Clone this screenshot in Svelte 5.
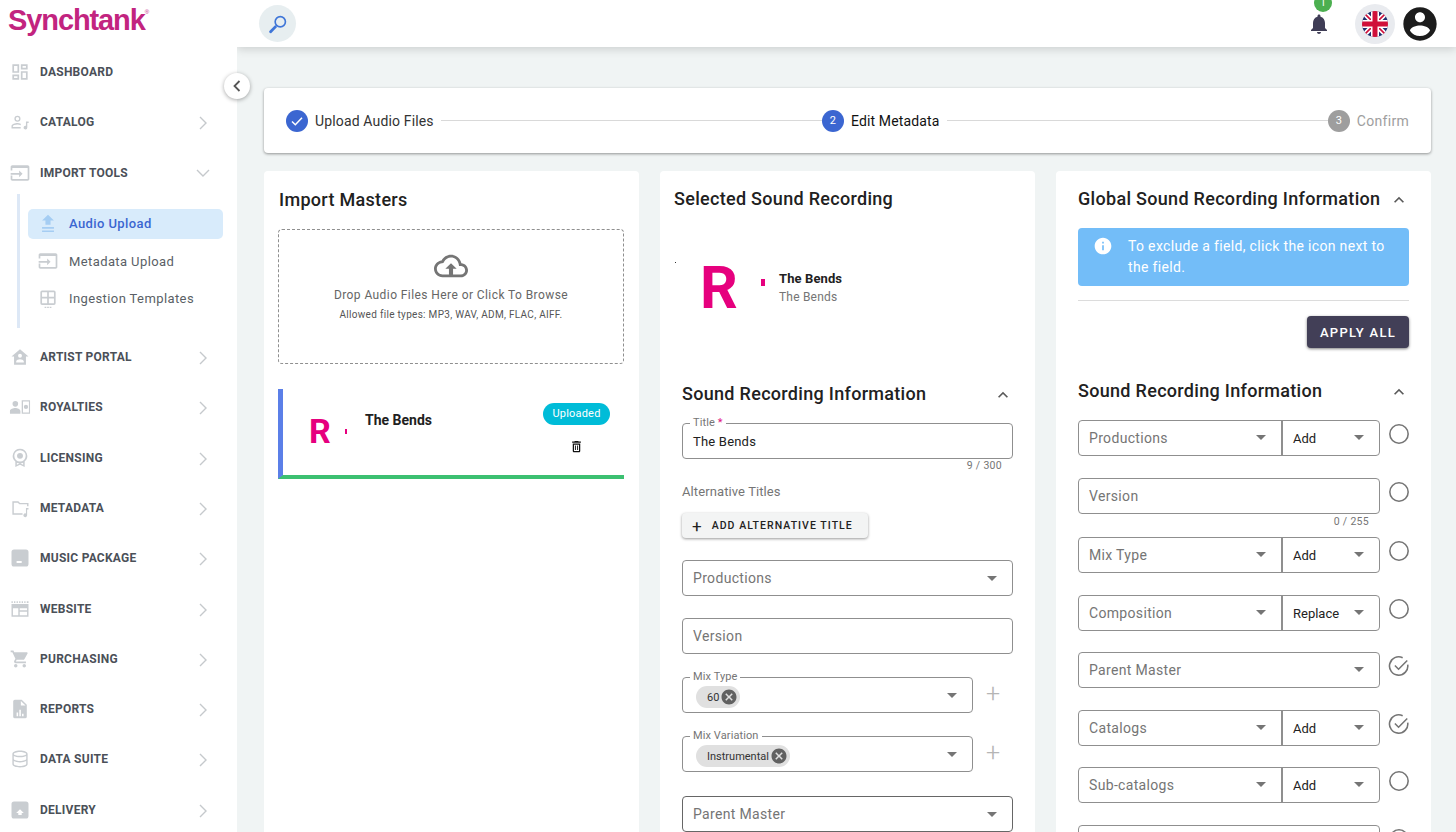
<script>
  const icons = {
    dashboard: 'M19 5v2h-4V5h4M9 5v6H5V5h4m10 8v6h-4v-6h4M9 17v2H5v-2h4M21 3h-8v6h8V3zM11 3H3v10h8V3zm10 8h-8v10h8V11zm-10 4H3v6h8v-6z',
    catalog: 'M9 4.5a3.6 3.6 0 1 1 0 7.2a3.6 3.6 0 0 1 0-7.2zm0 1.6a2 2 0 1 0 0 4a2 2 0 0 0 0-4zM2 19.5v-2.6c0-2.3 4.5-3.6 7-3.6 1.3 0 2.7.3 3.9.8v1.7c-1.2-.6-2.6-.9-3.9-.9-2.6 0-5.4 1.1-5.4 2v1h9.2v1.6zM19 11.5h3.2v1.7h-1.6v5.4a2.2 2.2 0 1 1-1.6-2.1z',
    input: 'M21 3.01H3c-1.1 0-2 .9-2 2V9h2V6h18v13.02H3V15H1v4.01c0 1.1.9 1.98 2 1.98h18c1.1 0 2-.88 2-1.98v-14c0-1.11-.9-2-2-2zM11 17l4-4-4-4v3H1v2h10v3z',
    upload: 'M12 1l7 7h-4v5H9V8H5zM5 15.5h14v2H5zM5 19.5h14v2H5z',
    templates: 'M5 2h14a2 2 0 0 1 2 2v13a2 2 0 0 1-2 2H5a2 2 0 0 1-2-2V4a2 2 0 0 1 2-2zm0 2v5.5h6V4zm8 0v5.5h6V4zm-8 7.500V17h6v-5.500zm8 0V17h6v-5.500zM8 21h2v1.500H8zM11 21h2v1.500h-2zM14 21h2v1.500h-2z',
    artist: 'M12 3l10 8.500h-3V21H5v-9.500H2zm0 5.200a2.300 2.300 0 1 0 0 4.600a2.300 2.300 0 0 0 0-4.600zM7.500 18.500h9v-1.200c0-1.800-3-2.700-4.500-2.700s-4.500.9-4.500 2.700z',
    royalties: 'M6.500 5a3.300 3.300 0 1 1 0 6.600a3.300 3.300 0 0 1 0-6.600zM0 20v-3c0-2.500 4.300-3.800 6.500-3.800s6 1.300 6 3.800v3zM14 4h10v16H14zm1.500 1.500v13h7v-13zM19 9.500a2.500 2.500 0 1 1 0 5a2.500 2.500 0 0 1 0-5z',
    licensing: 'M12 1a8.500 8.500 0 0 1 5.500 15v6.500L12 20l-5.500 2.500V16A8.500 8.500 0 0 1 12 1zm0 1.800a6.700 6.700 0 1 0 0 13.400a6.700 6.700 0 0 0 0-13.400zM12 6a3.500 3.500 0 1 1 0 7a3.500 3.500 0 0 1 0-7zM8.300 17.600v2.200l3.700-1.600 3.700 1.600v-2.200a8.500 8.500 0 0 1-7.400 0z',
    folder: 'M3 4h7l2 2h10v4h-1.700V7.700h-9L9.300 5.700H4.700v12.600H15V20H3zM19 12h3v1.700h-1.600V20.500a2.200 2.200 0 1 1-1.400-2z',
    package: 'M5 2h14a3 3 0 0 1 3 3v14a3 3 0 0 1-3 3H5a3 3 0 0 1-3-3V5a3 3 0 0 1 3-3zm3 13.500V18h6v-2.500z',
    website: 'M2 3h1.500v2H2zM5 3h1.500v2H5zM8 3h1.500v2H8zM11 3h1.500v2H11zM14 3h1.500v2H14zM17 3h1.500v2H17zM20 3h2v2h-2zM2 6h20v15H2zm1.700 5v8.300H10V11zm8 0v2.500h8.600V11zm0 4.200v4.100h8.600v-4.100z',
    cart: 'M7 18c-1.100 0-1.990.9-1.990 2S5.900 22 7 22s2-.9 2-2-.9-2-2-2zM1 2v2h2l3.600 7.590-1.350 2.450c-.16.28-.25.61-.25.96 0 1.100.9 2 2 2h12v-2H7.420c-.14 0-.25-.11-.25-.25l.03-.12.9-1.630h7.450c.75 0 1.410-.41 1.750-1.030l3.580-6.490c.08-.14.12-.31.12-.48 0-.55-.45-1-1-1H5.210l-.94-2H1zm16 16c-1.100 0-1.990.9-1.990 2s.89 2 1.990 2 2-.9 2-2-.9-2-2-2z',
    reports: 'M6 1h8l6 6v14a2 2 0 0 1-2 2H6a2 2 0 0 1-2-2V3a2 2 0 0 1 2-2zm7 1.500V8h5.500zM8 16v4.500h1.800V16zM11.200 13v7.500H13V13zM14.400 17.500v3h1.800v-3z',
    data: 'M12 2c5 0 9 1.500 9 4v12c0 2.500-4 4-9 4s-9-1.500-9-4V6c0-2.500 4-4 9-4zm0 1.700c-4.300 0-7.300 1.300-7.300 2.300S7.700 8.300 12 8.300s7.300-1.300 7.300-2.300S16.300 3.700 12 3.700zM4.700 8.500V12c0 1 3 2.300 7.300 2.300s7.300-1.300 7.300-2.300V8.500c-1.700 1-4.400 1.500-7.300 1.500s-5.600-.5-7.300-1.500zm0 6V18c0 1 3 2.300 7.300 2.300s7.300-1.300 7.300-2.300v-3.500c-1.700 1-4.400 1.500-7.300 1.500s-5.600-.5-7.300-1.500z',
    delivery: 'M5 2h14a3 3 0 0 1 3 3v14a3 3 0 0 1-3 3H5a3 3 0 0 1-3-3V5a3 3 0 0 1 3-3zm7 9l-4.500 4.500H10V18h4v-2.500h2.500z'
  };
  const before = [
    { label: 'DASHBOARD', icon: 'dashboard', chevron: false },
    { label: 'CATALOG', icon: 'catalog', chevron: true }
  ];
  const subs = [
    { label: 'Audio Upload', icon: 'upload', active: true },
    { label: 'Metadata Upload', icon: 'input' },
    { label: 'Ingestion Templates', icon: 'templates' }
  ];
  const after = [
    ['ARTIST PORTAL', 'artist'], ['ROYALTIES', 'royalties'], ['LICENSING', 'licensing'],
    ['METADATA', 'folder'], ['MUSIC PACKAGE', 'package'], ['WEBSITE', 'website'],
    ['PURCHASING', 'cart'], ['REPORTS', 'reports'], ['DATA SUITE', 'data'], ['DELIVERY', 'delivery']
  ];
  const globals = [
    { label: 'Productions', mode: 'Add', state: 'open' },
    { label: 'Version', text: true, counter: '0 / 255', state: 'open' },
    { label: 'Mix Type', mode: 'Add', state: 'open', nudge: 'down' },
    { label: 'Composition', mode: 'Replace', state: 'open' },
    { label: 'Parent Master', state: 'done', nudge: 'up' },
    { label: 'Catalogs', mode: 'Add', state: 'done' },
    { label: 'Sub-catalogs', mode: 'Add', state: 'open', nudge: 'up' },
    { label: 'Genres', text: true, state: 'open' }
  ];
</script>

{#snippet caret()}
  <svg class="caret" viewBox="0 0 24 24"><path d="M7 10l5 5 5-5z" /></svg>
{/snippet}

{#snippet chevronUp()}
  <svg class="chev-up" viewBox="0 0 24 24"><path d="M12 8l-6 6 1.410 1.410L12 10.830l4.590 4.580L18 14z" /></svg>
{/snippet}

{#snippet chevronRight()}
  <svg class="nav-chev" viewBox="0 0 12 16"><path d="M3 2l6 6-6 6" /></svg>
{/snippet}

{#snippet navRow(label, icon, chevron)}
  <div class="nav-row">
    <svg class="nav-icon" viewBox="0 0 24 24"><path fill-rule="evenodd" d={icons[icon]} /></svg>
    <span class="nav-label">{label}</span>
    {#if chevron}{@render chevronRight()}{/if}
  </div>
{/snippet}

{#snippet chip(label)}
  <span class="chip">
    {label}
    <svg viewBox="0 0 24 24"><path d="M12 2C6.470 2 2 6.470 2 12s4.470 10 10 10 10-4.470 10-10S17.530 2 12 2zm5 13.590L15.590 17 12 13.410 8.410 17 7 15.590 10.590 12 7 8.410 8.410 7 12 10.590 15.590 7 17 8.410 13.410 12 17 15.590z" /></svg>
  </span>
{/snippet}

<div class="app">
  <aside class="sidebar">
    <div class="logo">Synchtank<sup>®</sup></div>
    {#each before as item}
      {@render navRow(item.label, item.icon, item.chevron)}
    {/each}
    <div class="nav-row">
      <svg class="nav-icon" viewBox="0 0 24 24"><path fill-rule="evenodd" d={icons.input} /></svg>
      <span class="nav-label">IMPORT TOOLS</span>
      <svg class="nav-chev" viewBox="0 0 16 12"><path d="M2 3l6 6 6-6" /></svg>
    </div>
    <div class="sub">
      {#each subs as s}
        <div class="sub-row" class:active={s.active}>
          <svg viewBox="0 0 24 24"><path fill-rule="evenodd" d={icons[s.icon]} /></svg>
          <span>{s.label}</span>
        </div>
      {/each}
    </div>
    {#each after as [label, icon]}
      {@render navRow(label, icon, true)}
    {/each}
    <button class="collapse" aria-label="Collapse">
      <svg viewBox="0 0 12 16"><path d="M8.500 3l-5 5 5 5" /></svg>
    </button>
  </aside>

  <div class="main">
    <header class="topbar">
      <div class="search">
        <svg viewBox="0 0 24 24"><path d="M14.500 3a6.500 6.500 0 1 1 0 13a6.500 6.500 0 0 1 0-13zm0 1.800a4.700 4.700 0 1 0 0 9.400a4.700 4.700 0 0 0 0-9.400z" fill-rule="evenodd" /><path d="M9 13.200l2 2-6 6.300a1.500 1.500 0 0 1-2.200-2.100z" /></svg>
      </div>
      <div class="top-right">
        <div class="bell">
          <svg viewBox="0 0 24 24"><path d="M12 22c1.100 0 2-.9 2-2h-4c0 1.100.9 2 2 2zm6-6v-5c0-3.070-1.630-5.640-4.500-6.320V4c0-.83-.67-1.500-1.500-1.500s-1.500.67-1.500 1.500v.68C7.640 5.360 6 7.920 6 11v5l-2 2v1h16v-1l-2-2z" /></svg>
          <span class="badge">1</span>
        </div>
        <div class="flag">
          <svg viewBox="0 0 26 26">
            <defs><clipPath id="flagclip"><circle cx="13" cy="13" r="13" /></clipPath></defs>
            <g clip-path="url(#flagclip)">
              <rect width="26" height="26" fill="#1f2f6f" />
              <path d="M0 0L26 26M26 0L0 26" stroke="#fff" stroke-width="5" />
              <path d="M0 0L26 26M26 0L0 26" stroke="#d0103a" stroke-width="1.600" />
              <path d="M13 0V26M0 13H26" stroke="#fff" stroke-width="8" />
              <path d="M13 0V26M0 13H26" stroke="#d0103a" stroke-width="5" />
            </g>
          </svg>
        </div>
        <svg class="avatar" viewBox="0 0 24 24"><path d="M12 2C6.480 2 2 6.480 2 12s4.480 10 10 10 10-4.480 10-10S17.520 2 12 2zm0 3c1.660 0 3 1.340 3 3s-1.340 3-3 3-3-1.340-3-3 1.340-3 3-3zm0 14.200c-2.500 0-4.710-1.280-6-3.220.03-1.990 4-3.080 6-3.080 1.990 0 5.970 1.090 6 3.080-1.290 1.940-3.500 3.220-6 3.220z" /></svg>
      </div>
    </header>

    <div class="content">
      <section class="stepper">
        <span class="step-dot blue">
          <svg viewBox="0 0 24 24"><path d="M6 12.500l4 4 8-8.500" /></svg>
        </span>
        <span class="step-label">Upload Audio Files</span>
        <span class="step-line"></span>
        <span class="step-dot blue">2</span>
        <span class="step-label current">Edit Metadata</span>
        <span class="step-line"></span>
        <span class="step-dot gray">3</span>
        <span class="step-label muted">Confirm</span>
      </section>

      <div class="columns">
        <section class="card import">
          <h2>Import Masters</h2>
          <div class="drop">
            <svg viewBox="0 0 24 24"><path d="M19.350 10.040C18.670 6.590 15.640 4 12 4 9.110 4 6.600 5.640 5.350 8.040 2.340 8.360 0 10.910 0 14c0 3.310 2.690 6 6 6h4.550v-2H6c-2.210 0-4-1.790-4-4 0-2.050 1.530-3.760 3.560-3.970l1.070-.11.500-.95C8.080 7.140 9.940 6 12 6c2.620 0 4.880 1.860 5.390 4.430l.3 1.500 1.530.11c1.560.1 2.780 1.410 2.780 2.960 0 1.650-1.350 3-3 3h-5.550v2H19c2.760 0 5-2.240 5-5 0-2.640-2.050-4.780-4.650-4.960zM8 14h2.550v6h2.900v-6H16l-4-4z" /></svg>
            <p class="drop-main">Drop Audio Files Here or Click To Browse</p>
            <p class="drop-sub">Allowed file types: MP3, WAV, ADM, FLAC, AIFF.</p>
          </div>
          <div class="upload-row">
            <div class="thumb">R<i></i></div>
            <strong>The Bends</strong>
            <div class="upload-side">
              <span class="pill">Uploaded</span>
              <svg class="trash" viewBox="0 0 24 24"><path fill-rule="evenodd" d="M15.500 4l-1-1h-5l-1 1H5v2h14V4zM6 19c0 1.100.9 2 2 2h8c1.100 0 2-.9 2-2V7H6zm2-10h8v10H8zM9.500 10.500H11v7H9.500zM13 10.500h1.500v7H13z" /></svg>
            </div>
          </div>
        </section>

        <section class="card middle">
          <h2>Selected Sound Recording</h2>
          <div class="selected">
            <div class="art">R<i></i><b></b></div>
            <div class="selected-text">
              <strong>The Bends</strong>
              <span>The Bends</span>
            </div>
          </div>
          <div class="form">
            <div class="section-head">
              <h2>Sound Recording Information</h2>
              {@render chevronUp()}
            </div>
            <div class="field">
              <label>Title <em>*</em></label>
              <span class="value">The Bends</span>
            </div>
            <div class="counter">9 / 300</div>
            <div class="alt-label">Alternative Titles</div>
            <button class="add-alt"><span class="plus">+</span>ADD ALTERNATIVE TITLE</button>
            <div class="field gap-a"><span class="ph">Productions</span>{@render caret()}</div>
            <div class="field gap-a"><span class="ph">Version</span></div>
            <div class="with-plus gap-b">
              <div class="field chipped"><label>Mix Type</label>{@render chip('60')}{@render caret()}</div>
              <span class="side-plus">+</span>
            </div>
            <div class="with-plus gap-b">
              <div class="field chipped"><label>Mix Variation</label>{@render chip('Instrumental')}{@render caret()}</div>
              <span class="side-plus">+</span>
            </div>
            <div class="field dark gap-c"><span class="ph">Parent Master</span>{@render caret()}</div>
          </div>
        </section>

        <section class="card global">
          <div class="section-head first">
            <h2>Global Sound Recording Information</h2>
            {@render chevronUp()}
          </div>
          <div class="alert">
            <svg viewBox="0 0 24 24"><path d="M12 2C6.480 2 2 6.480 2 12s4.480 10 10 10 10-4.480 10-10S17.520 2 12 2zm1 15h-2v-6h2v6zm0-8h-2V7h2v2z" /></svg>
            <p>To exclude a field, click the icon next to the field.</p>
          </div>
          <hr />
          <div class="apply-wrap"><button class="apply">APPLY ALL</button></div>
          <div class="section-head second">
            <h2>Sound Recording Information</h2>
            {@render chevronUp()}
          </div>
          <div class="rows">
            {#each globals as g}
              <div class="row" class:down={g.nudge === 'down'} class:up={g.nudge === 'up'}>
                <div class="combo">
                  <div class="combo-main">
                    <span class="ph">{g.label}</span>
                    {#if !g.text}{@render caret()}{/if}
                  </div>
                  {#if g.mode}
                    <div class="combo-mode"><span>{g.mode}</span>{@render caret()}</div>
                  {/if}
                  {#if g.counter}<span class="row-counter">{g.counter}</span>{/if}
                </div>
                {#if g.state === 'open'}
                  <svg class="mark" viewBox="0 0 24 24"><circle cx="12" cy="12" r="10" /></svg>
                {:else}
                  <svg class="mark" viewBox="0 0 24 24"><path d="M21.500 10.500A10 10 0 1 1 16 3" /><path d="M7.500 11.500l4 4L21 6" /></svg>
                {/if}
              </div>
            {/each}
          </div>
        </section>
      </div>
    </div>
  </div>
</div>

<style>
  :global(body) { margin: 0; background: #f0f4f4; }
  * { box-sizing: border-box; }
  .app {
    display: flex; height: 832px; width: 1456px; overflow: hidden;
    font-family: Roboto, "Liberation Sans", sans-serif; color: #212121;
  }
  h2 { margin: 0; font-size: 18px; line-height: 24px; font-weight: 500; letter-spacing: .3px; color: #212121; }
  p { margin: 0; }

  .sidebar { position: relative; width: 237px; flex: none; background: #fff; z-index: 2; }
  .logo {
    height: 47px; padding: 3px 0 0 8px;
    font-family: "Liberation Sans", sans-serif; font-weight: 700; font-size: 29px; line-height: 34px;
    letter-spacing: -1.1px; color: #c2247f;
  }
  .logo sup { font-size: 6px; letter-spacing: 0; vertical-align: 16px; line-height: 0; font-weight: 400; }
  .nav-row { display: flex; align-items: center; height: 50.3px; padding-left: 8px; }
  .nav-icon { width: 24px; height: 24px; fill: #c9cdd1; flex: none; transform: scale(.85); }
  .nav-label { margin-left: 8px; font-size: 12px; font-weight: 700; letter-spacing: .25px; color: #4b5058; flex: 1; }
  .nav-chev { width: 12px; height: 16px; margin: 2px 28px 0 0; fill: none; stroke: #c5c9cc; stroke-width: 1.400; flex: none; }
  .nav-chev[viewBox="0 0 16 12"] { width: 16px; height: 12px; margin: 0 26px 0 0; }
  .sub {
    margin: -4px 0 4px 17px; height: 134px; border-left: 3px solid #dde8f6; padding: 15px 0 0 8px;
    display: flex; flex-direction: column; gap: 7.500px;
  }
  .sub-row { width: 195px; height: 30px; display: flex; align-items: center; padding-left: 8px; border-radius: 5px; font-size: 13px; letter-spacing: .4px; color: #5a5f66; }
  .sub-row svg { width: 24px; height: 24px; fill: #c9cdd1; margin-right: 9px; flex: none; transform: scale(.85); }
  .sub-row.active { background: #d8ebfb; color: #3b66d1; font-weight: 500; }
  .sub-row.active svg { fill: #a5cdf3; }
  .collapse {
    position: absolute; left: 224px; top: 73px; width: 26px; height: 26px; padding: 0; border: 0; border-radius: 50%;
    background: #fff; box-shadow: 0 1px 4px rgba(0,0,0,.35); display: flex; align-items: center; justify-content: center;
  }
  .collapse svg { width: 12px; height: 16px; fill: none; stroke: #555; stroke-width: 1.800; }

  .main { flex: 1; min-width: 0; display: flex; flex-direction: column; }
  .topbar {
    height: 47px; flex: none; background: #fff; box-shadow: 0 2px 9px rgba(0,0,0,.16);
    display: flex; align-items: center; justify-content: space-between; padding: 0 16px 7px 22px;
  }
  .search { width: 37px; height: 37px; border-radius: 50%; background: #e7eef0; display: flex; align-items: center; justify-content: center; margin-top: 7px; }
  .search svg { width: 22px; height: 22px; fill: #3f76d8; }
  .top-right { display: flex; align-items: center; margin-top: 7px; }
  .bell { position: relative; width: 24px; height: 24px; margin-right: 24px; }
  .bell svg { width: 24px; height: 24px; fill: #3f3d56; display: block; }
  .badge {
    position: absolute; left: 7px; top: -18px; width: 18px; height: 18px; border-radius: 50%;
    background: #4caf50; color: #fff; font-size: 10px; line-height: 18px; text-align: center;
  }
  .flag { width: 40px; height: 40px; border-radius: 50%; background: #e9ebef; display: flex; align-items: center; justify-content: center; margin-right: 5px; }
  .flag svg { width: 26px; height: 26px; }
  .avatar { width: 40px; height: 40px; fill: #1c1c1c; display: block; }

  .content { padding: 41px 25px 0 27px; flex: 1; min-height: 0; }
  .stepper {
    height: 65px; background: #fff; border-radius: 4px; padding: 0 22px; margin-bottom: 18px;
    box-shadow: 0 1px 3px rgba(0,0,0,.4); display: flex; align-items: center;
  }
  .step-dot { width: 22px; height: 22px; border-radius: 50%; color: #fff; font-size: 11px; display: flex; align-items: center; justify-content: center; flex: none; }
  .step-dot svg { width: 20px; height: 20px; fill: none; stroke: #fff; stroke-width: 1.800; }
  .step-dot.blue { background: #3b66d1; }
  .step-dot.gray { background: #9e9e9e; }
  .step-label { margin: 0 7px; font-size: 14px; letter-spacing: .15px; color: #333; }
  .step-label.current { color: #111; }
  .step-label.muted { color: #9e9e9e; margin-right: 0; letter-spacing: .3px; }
  .step-line { flex: 1; height: 1px; background: #d9d9d9; }

  .columns { display: grid; grid-template-columns: 375px 375px 375px; gap: 21px; }
  .card { background: #fff; border-radius: 4px; height: 800px; }

  .import { padding: 17px 15px 0 14px; }
  .import h2 { padding-left: 1px; }
  .drop {
    margin-top: 17px; height: 135px; border: 1px dashed #8f8f8f; border-radius: 4px;
    display: flex; flex-direction: column; align-items: center; padding-top: 19px;
  }
  .drop svg { width: 34px; height: 34px; fill: #757575; }
  .drop-main { margin-top: 4px; font-size: 12px; line-height: 16px; letter-spacing: .42px; color: #666; }
  .drop-sub { margin-top: 5px; font-size: 10px; line-height: 14px; letter-spacing: .3px; color: #555; }
  .upload-row {
    margin-top: 25px; height: 90px; border-left: 5px solid #5b7fe8; border-bottom: 4px solid #3cc071;
    display: flex; position: relative; padding: 21px 14px 0 26px; overflow: hidden;
  }
  .thumb { position: relative; width: 56px; font-family: Roboto, sans-serif; font-weight: 700; font-size: 34px; line-height: 42px; color: #e6007e; flex: none; }
  .thumb i { position: absolute; left: 36px; top: 19px; width: 2px; height: 5px; background: #e6007e; }
  .upload-row strong { font-size: 14px; line-height: 20px; font-weight: 700; color: #212121; }
  .upload-side { margin-left: auto; margin-top: -7px; display: flex; flex-direction: column; align-items: center; }
  .pill { height: 22px; width: 67px; border-radius: 11px; background: #00bcd8; color: #fff; font-size: 11px; line-height: 22px; text-align: center; letter-spacing: .2px; }
  .trash { width: 15px; height: 15px; margin-top: 14px; fill: #111; }

  .middle { padding: 16px 22px 0 14px; }
  .selected { display: flex; align-items: center; height: 130px; margin-top: 12px; }
  .art { position: relative; width: 91px; padding-left: 26px; font-family: Roboto, sans-serif; font-weight: 700; font-size: 59px; line-height: 70px; color: #e6007e; flex: none; }
  .art i { position: absolute; left: 87px; top: 26px; width: 4px; height: 7px; background: #e6007e; }
  .art b { position: absolute; left: 1px; top: 9px; width: 1px; height: 1px; background: #333; }
  .selected-text { margin-left: 14px; display: flex; flex-direction: column; }
  .selected-text strong { font-size: 13px; line-height: 18px; font-weight: 700; letter-spacing: .1px; }
  .selected-text span { font-size: 12px; line-height: 18px; color: #757575; letter-spacing: .2px; }
  .form { padding-left: 8px; margin-top: 29px; }
  .section-head { display: flex; align-items: center; justify-content: space-between; }
  .chev-up { width: 20px; height: 20px; fill: #5a5a5a; margin: 2px 0 0 0; flex: none; }
  .form .section-head { margin-bottom: 17px; }
  .form .chev-up { margin-right: 0; }

  .field {
    position: relative; height: 36px; border: 1px solid #8f8f8f; border-radius: 4px;
    display: flex; align-items: center; justify-content: space-between; padding: 0 8px 0 10px;
  }
  .field label { position: absolute; left: 7px; top: -8px; padding: 0 3px; background: #fff; font-size: 11px; line-height: 14px; color: #757575; letter-spacing: .1px; }
  .field em { color: #e0147f; font-style: normal; }
  .value { font-size: 13px; letter-spacing: .2px; color: #212121; }
  .ph { font-size: 14px; letter-spacing: .33px; color: #757575; }
  .caret { width: 24px; height: 24px; fill: #757575; flex: none; }
  .counter { height: 12px; margin-top: 1px; padding-right: 11px; text-align: right; font-size: 10.500px; line-height: 12px; letter-spacing: .3px; color: #757575; }
  .alt-label { margin-top: 12px; font-size: 13px; line-height: 16px; letter-spacing: .1px; color: #757575; }
  .add-alt {
    margin-top: 13px; height: 25px; width: 186px; border: 0; border-radius: 4px; padding: 0 0 0 10px;
    background: #f3f4f4; box-shadow: 0 1px 3px rgba(0,0,0,.4); display: flex; align-items: center;
    font-family: inherit; font-size: 10.500px; font-weight: 500; letter-spacing: 1.050px; color: #222;
  }
  .plus { font-size: 17px; font-weight: 400; line-height: 20px; margin-right: 10px; letter-spacing: 0; }
  .gap-a { margin-top: 22px; }
  .gap-b { margin-top: 23px; }
  .gap-c { margin-top: 24px; }
  .dark { border-color: #666; }
  .with-plus { display: flex; align-items: center; }
  .with-plus .field { width: 291px; flex: none; }
  .side-plus { width: 40px; text-align: center; margin-top: -2px; font-size: 25px; font-weight: 300; line-height: 30px; color: #b5b5b5; }
  .chipped { padding: 4px 8px 0 13px; }
  .chipped .caret { margin-top: -5px; }
  .chip {
    height: 22px; border-radius: 11px; background: #e0e0e0; padding: 0 2px 0 11px;
    display: inline-flex; align-items: center; gap: 1px; font-size: 11px; color: #333;
  }
  .chip svg { width: 18px; height: 18px; fill: #616161; }

  .global { padding: 16px 22px 0 22px; }
  .alert { margin-top: 17px; height: 58px; border-radius: 4px; background: #73bdf8; display: flex; padding: 8px 16px 0 15px; }
  .alert svg { width: 20px; height: 20px; fill: #fff; flex: none; margin-right: 15px; }
  .alert p { font-size: 14px; line-height: 21px; letter-spacing: .33px; color: #fff; }
  hr { margin: 14px 0 0; border: 0; border-top: 1px solid #dcdcdc; }
  .apply-wrap { display: flex; justify-content: flex-end; margin-top: 15px; }
  .apply {
    width: 102px; height: 32px; border: 0; border-radius: 4px; background: #423f57; color: #fff;
    font-family: inherit; font-size: 13px; font-weight: 500; letter-spacing: 1.300px; box-shadow: 0 1px 3px rgba(0,0,0,.5);
  }
  .section-head.second { margin-top: 31px; margin-bottom: 17px; }
  .rows { display: flex; flex-direction: column; gap: 22px; }
  .row { display: flex; align-items: flex-start; }
  .row.down { margin-top: 1px; }
  .row.up { margin-top: -1px; }
  .combo { position: relative; width: 302px; height: 36px; border: 1px solid #8f8f8f; border-radius: 4px; display: flex; flex: none; }
  .combo-main { flex: 1; min-width: 0; display: flex; align-items: center; justify-content: space-between; padding: 0 8px 0 10px; }
  .combo-main .ph { margin-top: -1px; }
  .combo-main .caret { margin-top: -3px; }
  .combo-mode { width: 98px; flex: none; border-left: 2px solid #8f8f8f; display: flex; align-items: center; justify-content: space-between; padding: 0 8px 0 10px; font-size: 13px; color: #222; }
  .combo-mode .caret { margin-top: -3px; }
  .combo-mode span { margin-top: 1px; }
  .row-counter { position: absolute; right: 10px; top: 36px; font-size: 10.500px; line-height: 14px; letter-spacing: .3px; color: #757575; }
  .mark { width: 22px; height: 22px; margin: 3px 0 0 8px; fill: none; stroke: #757575; stroke-width: 1.700; flex: none; }
</style>
